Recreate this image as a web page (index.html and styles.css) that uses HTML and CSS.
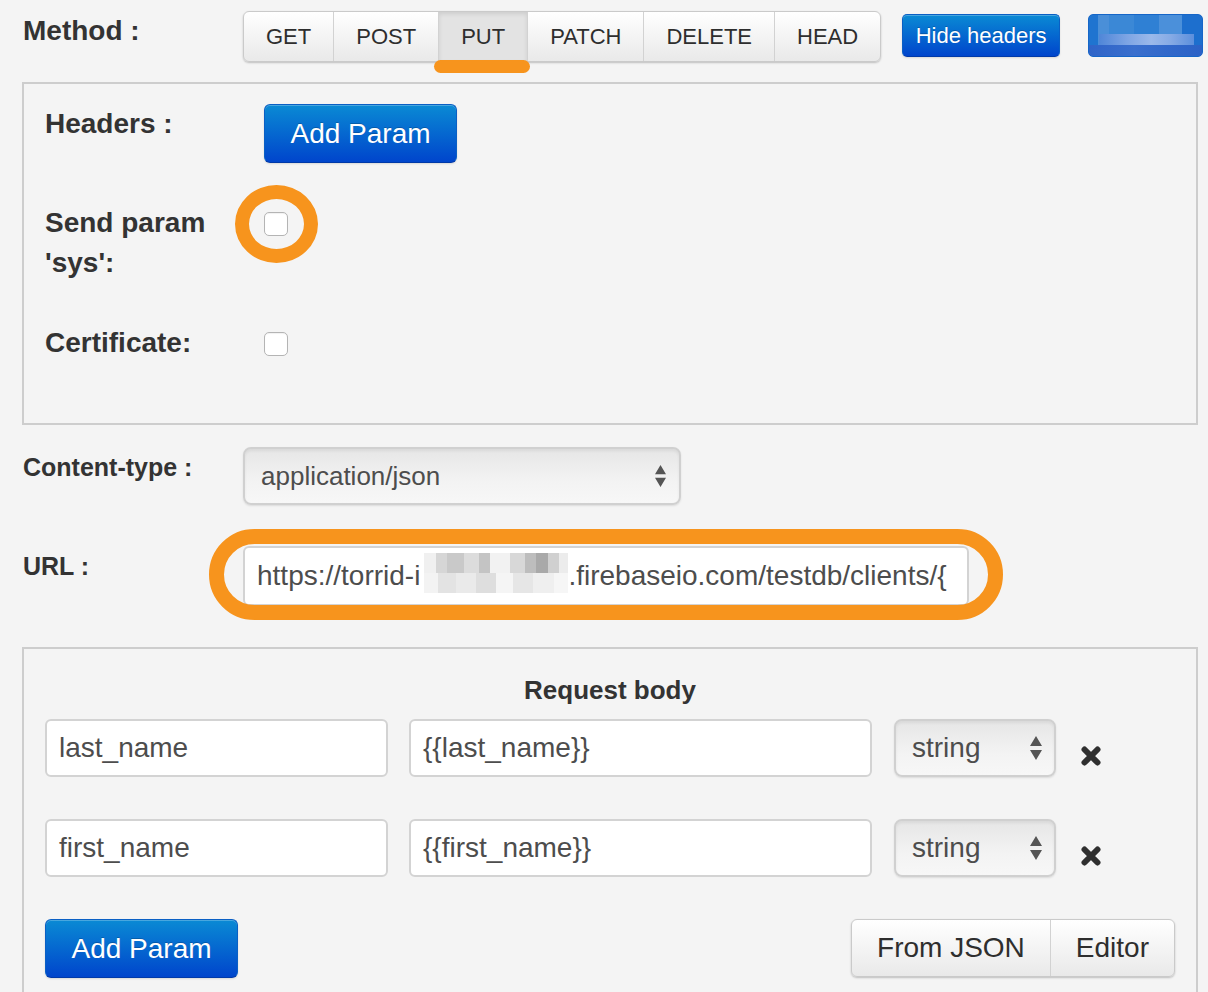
FILE: index.html
```html
<!DOCTYPE html>
<html>
<head>
<meta charset="utf-8">
<title>Request</title>
<link rel="stylesheet" href="styles.css">
</head>
<body>
<div class="page">
  <div class="row method-row">
    <div class="label label-lg">Method :</div>
    <div class="btn-group">
      <button class="btn">GET</button>
      <button class="btn">POST</button>
      <button class="btn active">PUT<span class="mark-bar"></span></button>
      <button class="btn">PATCH</button>
      <button class="btn">DELETE</button>
      <button class="btn">HEAD</button>
    </div>
    <button class="btn-primary btn-hide">Hide headers</button>
    <div class="btn-blur"><span class="blur-band"></span></div>
  </div>

  <div class="panel headers-panel">
    <div class="prow">
      <div class="plabel">Headers :</div>
      <button class="btn-primary btn-add">Add Param</button>
    </div>
    <div class="prow">
      <div class="plabel">Send param 'sys':</div>
      <span class="check-wrap"><span class="checkbox"></span><span class="mark-circle"></span></span>
    </div>
    <div class="prow">
      <div class="plabel">Certificate:</div>
      <span class="check-wrap"><span class="checkbox"></span></span>
    </div>
  </div>

  <div class="row content-row">
    <div class="label label-md">Content-type :</div>
    <div class="select select-ct">
      <span>application/json</span>
      <svg class="arrows" width="11" height="22" viewBox="0 0 12 24"><path d="M0 10 L6 0 L12 10 Z M0 14 L12 14 L6 24 Z" fill="#555"/></svg>
    </div>
  </div>

  <div class="row url-row">
    <div class="label label-md">URL :</div>
    <div class="url-wrap">
      <div class="url-field">https://torrid-i<span class="blur-text"></span>.firebaseio.com/testdb/clients/{</div>
      <span class="mark-ring"></span>
    </div>
  </div>

  <div class="panel body-panel">
    <div class="body-title">Request body</div>
    <div class="param-row">
      <div class="field field-key">last_name</div>
      <div class="field field-val">{{last_name}}</div>
      <div class="select select-type">
        <span>string</span>
        <svg class="arrows" width="12" height="24" viewBox="0 0 12 24"><path d="M0 10 L6 0 L12 10 Z M0 14 L12 14 L6 24 Z" fill="#555"/></svg>
      </div>
      <svg class="remove" width="22" height="20" viewBox="0 0 22 20"><path d="M4.5 3.5 L17.5 16.5 M17.5 3.5 L4.5 16.5" stroke="#2f2f2f" stroke-width="6" stroke-linecap="round"/></svg>
    </div>
    <div class="param-row">
      <div class="field field-key">first_name</div>
      <div class="field field-val">{{first_name}}</div>
      <div class="select select-type">
        <span>string</span>
        <svg class="arrows" width="12" height="24" viewBox="0 0 12 24"><path d="M0 10 L6 0 L12 10 Z M0 14 L12 14 L6 24 Z" fill="#555"/></svg>
      </div>
      <svg class="remove" width="22" height="20" viewBox="0 0 22 20"><path d="M4.5 3.5 L17.5 16.5 M17.5 3.5 L4.5 16.5" stroke="#2f2f2f" stroke-width="6" stroke-linecap="round"/></svg>
    </div>
    <div class="footer-row">
      <button class="btn-primary btn-add">Add Param</button>
      <div class="btn-group btn-group-lg">
        <button class="btn">From JSON</button>
        <button class="btn">Editor</button>
      </div>
    </div>
  </div>
</div>
</body>
</html>
```

FILE: styles.css
```css
* { box-sizing: border-box; }
html { overflow: hidden; }
html, body { margin: 0; padding: 0; background: #f4f4f4; }
body {
  font-family: "Liberation Sans", Arial, Helvetica, sans-serif;
  color: #333;
}
button { font-family: inherit; cursor: pointer; white-space: nowrap; }

.page { padding: 11px 10px 0 22px; width: 1208px; }

.row { display: flex; align-items: flex-start; }

.label {
  width: 221px;
  padding-left: 1px;
  flex-shrink: 0;
  font-weight: bold;
  color: #333;
}
.label-lg { font-size: 28px; line-height: 40px; }
.label-md { font-size: 25px; line-height: 41px; }

/* segmented buttons */
.btn-group {
  display: flex;
  flex-shrink: 0;
  height: 51px;
  border: 1px solid #cacaca;
  border-radius: 6px;
  background: linear-gradient(#ffffff, #e9e9e9);
  box-shadow: 0 1px 2px rgba(0,0,0,0.22);
}
.btn {
  position: relative;
  border: 0;
  border-left: 1px solid #d2d2d2;
  background: transparent;
  padding: 0 22px;
  font-size: 22px;
  color: #2e2e2e;
}
.btn:first-child { border-left: 0; border-radius: 5px 0 0 5px; }
.btn:last-child { border-radius: 0 5px 5px 0; }
.btn.active {
  background: #e3e3e3;
  box-shadow: inset 0 2px 4px rgba(0,0,0,0.10);
}
.mark-bar {
  position: absolute;
  left: -5px;
  top: 48px;
  width: 96px;
  height: 13px;
  border-radius: 7px;
  background: #f7941d;
}

.btn-primary {
  color: #fff;
  background: linear-gradient(#0a8ad4, #0045cc);
  border: 1px solid #0a5fc4;
  border-bottom-color: #0039a8;
  border-radius: 5px;
  box-shadow: inset 0 1px 0 rgba(255,255,255,0.25), 0 1px 2px rgba(0,0,0,0.12);
  text-shadow: 0 -1px 0 rgba(0,0,0,0.2);
  flex-shrink: 0;
}
.btn-hide {
  margin-left: 21px;
  margin-top: 3px;
  width: 158px;
  height: 43px;
  padding: 0;
  font-size: 22px;
}
.btn-blur {
  position: relative;
  flex-shrink: 0;
  margin-left: 28px;
  margin-top: 3px;
  width: 115px;
  height: 43px;
  border-radius: 5px;
  border: 1px solid #1666c8;
  background:
    linear-gradient(90deg, #1f74d0 0 8%, #4a8fd8 8% 18%, #3b88d6 18% 40%, #2f80d4 40% 62%, #4b90da 62% 82%, #1d6fce 82%);
  overflow: hidden;
}
.blur-band {
  position: absolute;
  left: 10px;
  right: 8px;
  top: 19px;
  height: 12px;
  background: linear-gradient(90deg, #4f86d8, #7ea5e4 30%, #9bb9ea 55%, #86abe5 75%, #5c8fdc);
}
.btn-blur::after {
  content: "";
  position: absolute;
  left: 0; right: 0; bottom: 0;
  height: 11px;
  background: linear-gradient(90deg, #2f64c8, #3a6fcd 40%, #3168ca 70%, #2c62c6);
}

/* panels */
.panel {
  width: 1176px;
  border: 2px solid #cdcdcd;
  background: #f4f4f4;
}
.headers-panel {
  margin-top: 20px;
  padding: 20px 21px 60px;
  display: flex;
  flex-direction: column;
  gap: 40px;
}
.prow { display: flex; align-items: flex-start; }
.plabel {
  width: 219px;
  flex-shrink: 0;
  padding-right: 10px;
  font-size: 28px;
  line-height: 40px;
  font-weight: bold;
  color: #333;
}
.btn-add {
  width: 193px;
  height: 59px;
  font-size: 28px;
  padding: 0;
  border-radius: 6px;
}

.check-wrap {
  position: relative;
  display: block;
  width: 24px;
  height: 24px;
  margin-top: 9px;
}
.checkbox {
  display: block;
  width: 24px;
  height: 24px;
  background: #fff;
  border: 1px solid #b4b4b4;
  border-radius: 5px;
  box-shadow: inset 0 1px 1px rgba(0,0,0,0.06);
}
.mark-circle {
  position: absolute;
  left: -29px;
  top: -27px;
  width: 83px;
  height: 78px;
  border: 14px solid #f7941d;
  border-radius: 50%;
}

/* selects */
.select {
  display: flex;
  align-items: center;
  justify-content: space-between;
  background: linear-gradient(#e6e6e6, #f3f3f3 60%, #f7f7f7);
  border: 2px solid #d0d0d0;
  border-radius: 8px;
  box-shadow: inset 0 2px 3px rgba(0,0,0,0.06), 0 1px 2px rgba(0,0,0,0.10);
  color: #4d4d4d;
}
.select-ct {
  width: 438px;
  height: 58px;
  padding: 0 13px 0 16px;
  font-size: 26px;
}
.select-type {
  width: 162px;
  height: 58px;
  padding: 0 12px 0 16px;
  font-size: 28px;
  flex-shrink: 0;
}
.arrows { display: block; }

.content-row { margin-top: 22px; }

/* URL */
.url-row { margin-top: 41px; }
.url-wrap { position: relative; }
.url-field {
  width: 726px;
  height: 60px;
  padding: 0 12px;
  background: #fff;
  border: 2px solid #d3d3d3;
  border-radius: 6px;
  font-size: 28px;
  line-height: 56px;
  color: #4d4d4d;
  white-space: nowrap;
  overflow: hidden;
}
.blur-text {
  display: inline-block;
  width: 144px;
  height: 40px;
  margin-left: 4px;
  vertical-align: -8px;
  background:
    linear-gradient(90deg, #f0f0f0 0 8%, #d6d6d6 8% 16%, #c9c9c9 16% 28%, #dcdcdc 28% 38%, #c4c4c4 38% 46%, #f2f2f2 46% 60%, #d8d8d8 60% 70%, #bdbdbd 70% 78%, #a9a9a9 78% 86%, #d0d0d0 86% 94%, #ececec 94%) top / 100% 50% no-repeat,
    linear-gradient(90deg, #f3f3f3 0 10%, #e3e3e3 10% 22%, #eaeaea 22% 36%, #dedede 36% 50%, #f5f5f5 50% 62%, #e6e6e6 62% 76%, #efefef 76% 90%, #f6f6f6 90%) bottom / 100% 50% no-repeat;
}
.mark-ring {
  position: absolute;
  left: -34px;
  top: -17px;
  width: 794px;
  height: 91px;
  border: 15px solid #f7941d;
  border-radius: 46px;
  pointer-events: none;
}

/* body panel */
.body-panel {
  margin-top: 41px;
  padding: 26px 21px 40px;
}
.body-title {
  text-align: center;
  font-size: 26px;
  font-weight: bold;
  line-height: 30px;
  margin-bottom: 14px;
  color: #333;
}
.param-row {
  display: flex;
  align-items: flex-start;
  height: 58px;
  margin-bottom: 42px;
}
.field {
  height: 58px;
  background: #fff;
  border: 2px solid #d3d3d3;
  border-radius: 6px;
  padding: 0 12px;
  font-size: 28px;
  line-height: 54px;
  color: #4d4d4d;
  white-space: nowrap;
  overflow: hidden;
  flex-shrink: 0;
}
.field-key { width: 343px; margin-right: 21px; }
.field-val { width: 463px; margin-right: 22px; }
.remove { display: block; margin-left: 24px; margin-top: 27px; flex-shrink: 0; }

.footer-row {
  display: flex;
  justify-content: space-between;
  align-items: flex-start;
}
.btn-group-lg { height: 58px; }
.btn-group-lg .btn { font-size: 28px; padding: 0 25px; }
```
